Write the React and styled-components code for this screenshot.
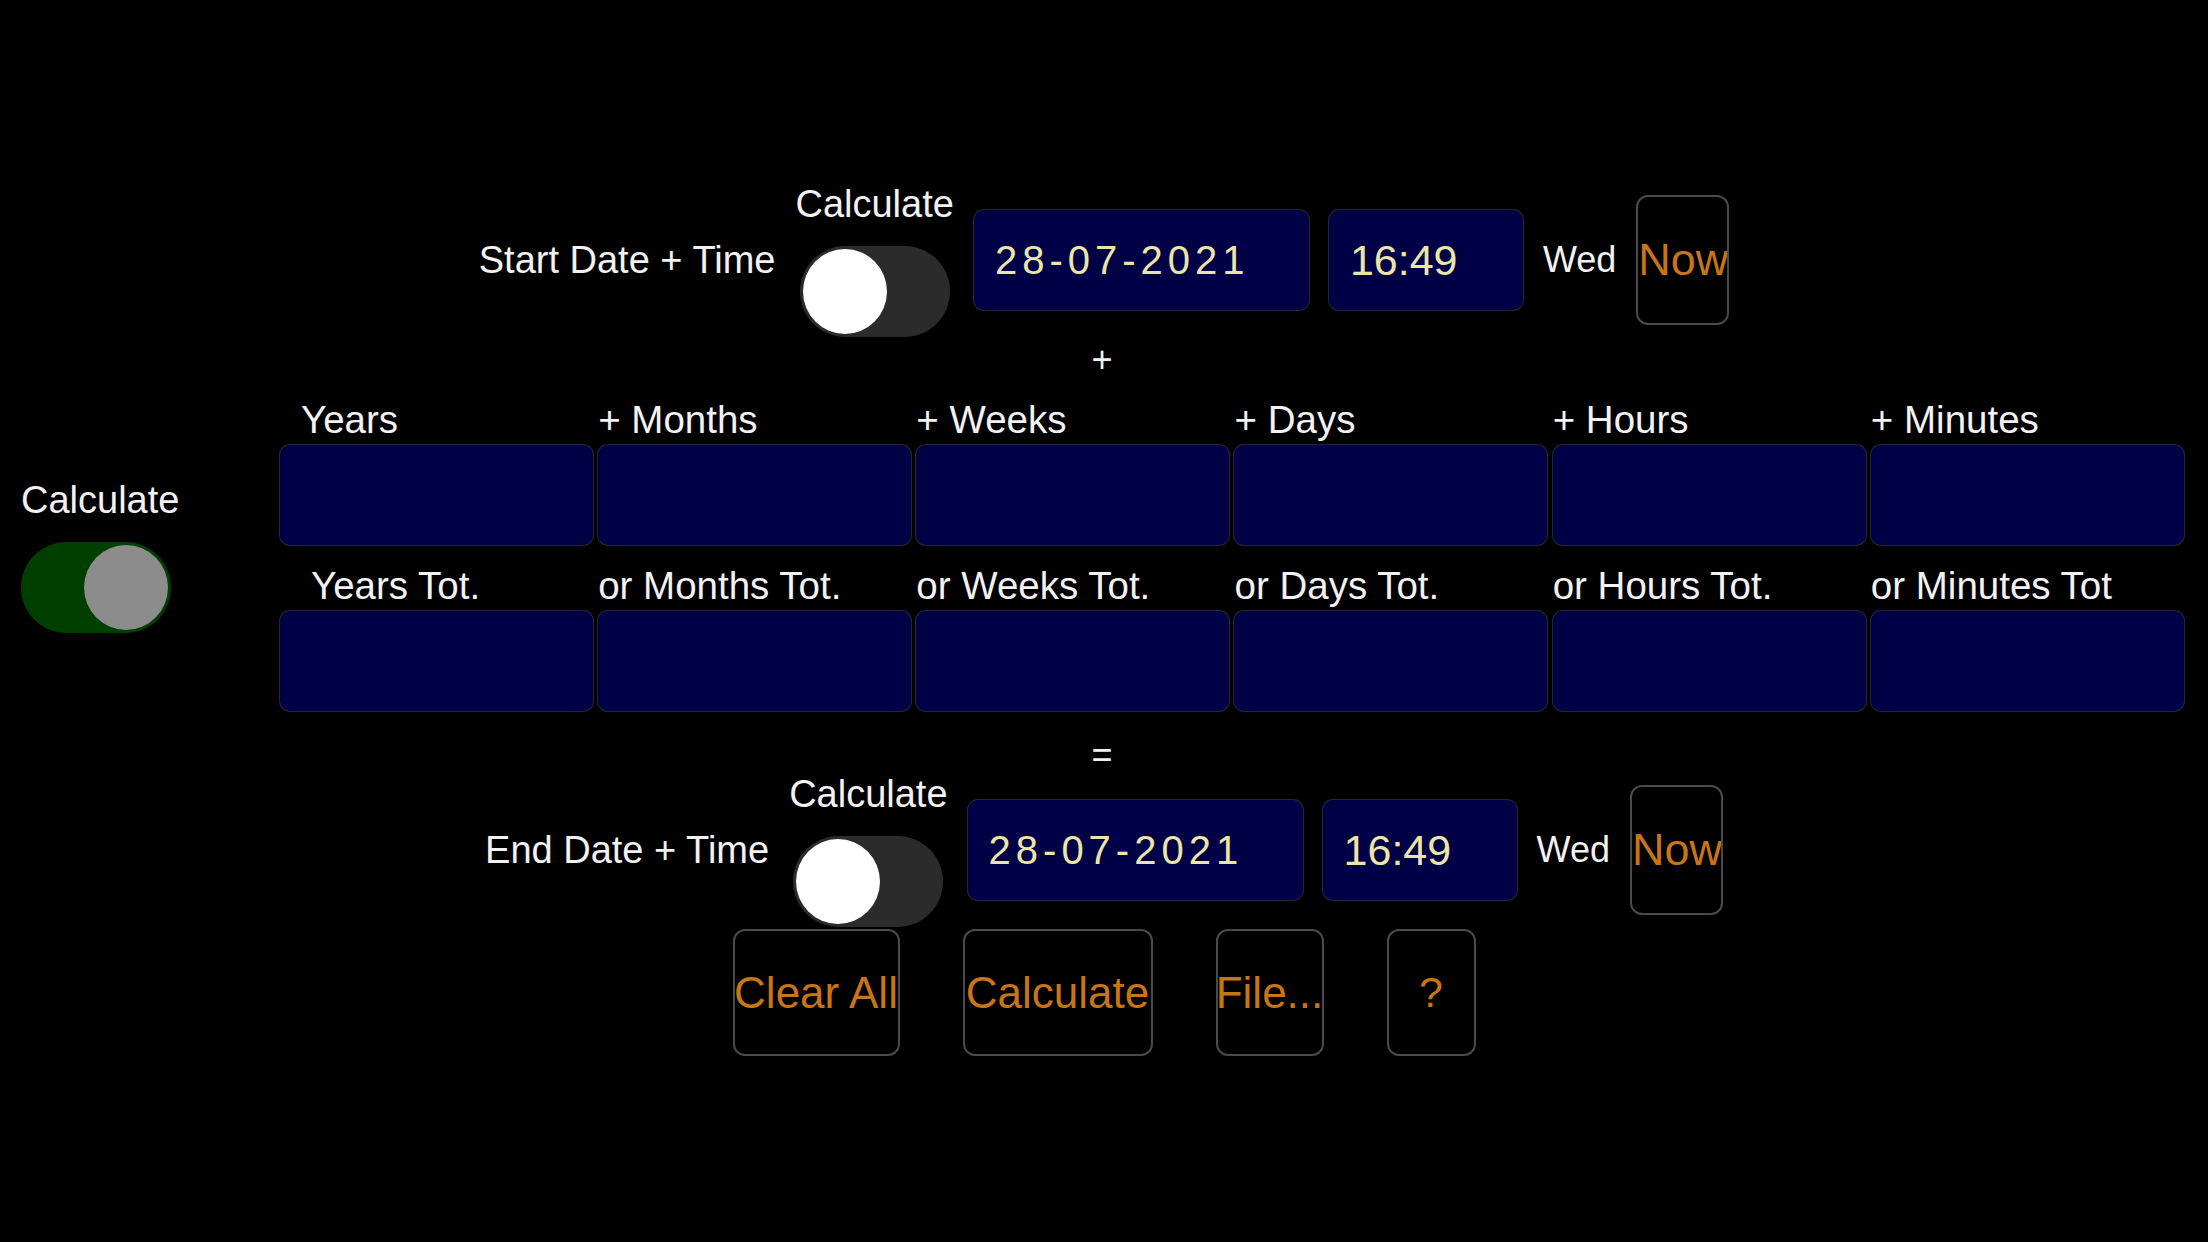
import React from 'react';
import styled, { createGlobalStyle } from 'styled-components';

const GlobalStyle = createGlobalStyle`
  html, body {
    margin: 0;
    padding: 0;
    background: #000;
  }
  body {
    font-family: "Liberation Sans", Arial, sans-serif;
    color: #f2f2f2;
  }
`;

const Page = styled.div`
  width: 2208px;
  height: 1242px;
  display: flex;
  flex-direction: column;
  align-items: stretch;
  padding-top: 183px;
  box-sizing: border-box;
  overflow: hidden;
`;

const DateRow = styled.div`
  display: flex;
  justify-content: center;
  align-items: center;
  gap: 20px;
  height: 154px;
`;

const Text = styled.span`
  font-size: ${(p) => p.$size || 38}px;
  line-height: 42px;
  white-space: nowrap;
  color: #f2f2f2;
`;

const ToggleColumn = styled.div`
  display: flex;
  flex-direction: column;
  align-items: ${(p) => p.$align || 'center'};
  gap: 21px;
`;

const Track = styled.div`
  width: 150px;
  height: 91px;
  border-radius: 46px;
  background: ${(p) => (p.$on ? '#003f00' : '#2b2b2b')};
  display: flex;
  align-items: center;
  justify-content: ${(p) => (p.$on ? 'flex-end' : 'flex-start')};
  padding: 0 3px;
  box-sizing: border-box;
`;

const Knob = styled.div`
  width: 84px;
  height: 85px;
  border-radius: 50%;
  background: ${(p) => (p.$on ? '#8c8c8c' : '#ffffff')};
`;

const Toggle = ({ on }) => (
  <Track $on={on}>
    <Knob $on={on} />
  </Track>
);

const InputBox = styled.div`
  width: ${(p) => p.$w || 313}px;
  height: 100px;
  background: #000046;
  border-radius: 10px;
  box-shadow: 0 0 0 1px rgba(110, 110, 140, 0.35);
  display: flex;
  align-items: center;
  padding-left: 21px;
  box-sizing: border-box;
  color: #ece6a6;
  font-size: ${(p) => p.$size || 40}px;
  letter-spacing: ${(p) => p.$spacing || 0}px;
  white-space: nowrap;
`;

const OutlineButton = styled.button`
  width: ${(p) => p.$w}px;
  height: ${(p) => p.$h || 127}px;
  background: transparent;
  border: 2px solid #4a4a4a;
  border-radius: 12px;
  padding: 0;
  display: flex;
  align-items: center;
  justify-content: ${(p) => p.$justify || 'center'};
  overflow: hidden;
  color: #c87516;
  font-family: "Liberation Sans", Arial, sans-serif;
  font-size: ${(p) => p.$size || 44}px;
  white-space: nowrap;
  box-sizing: border-box;
`;

const Sign = styled.div`
  text-align: center;
  font-size: 36px;
  line-height: 36px;
  margin-top: ${(p) => p.$top}px;
  padding-right: 4px;
`;

const Middle = styled.div`
  display: flex;
  align-items: center;
  margin-top: 22px;
`;

const SidePanel = styled.div`
  width: 280px;
  padding-left: 21px;
  box-sizing: border-box;
`;

const Fields = styled.div`
  width: 1904px;
  display: flex;
  flex-direction: column;
  gap: 21px;
`;

const FieldRow = styled.div`
  display: grid;
  grid-template-columns: repeat(6, 1fr);
  column-gap: 5px;
`;

const Field = styled.div`
  display: flex;
  flex-direction: column;
  gap: 5px;
`;

const FieldLabel = styled.div`
  font-size: 38.5px;
  line-height: 40px;
  height: 40px;
  padding-left: ${(p) => p.$indent || 0}px;
  white-space: nowrap;
`;

const Actions = styled.div`
  display: flex;
  justify-content: center;
  gap: 63px;
  margin-top: 2px;
`;

const DateTimeRow = ({ label }) => (
  <DateRow>
    <Text>{label}</Text>
    <ToggleColumn>
      <Text>Calculate</Text>
      <Toggle on={false} />
    </ToggleColumn>
    <InputBox $w={335} $size={40} $spacing={5}>28-07-2021</InputBox>
    <InputBox $w={194} $size={43}>16:49</InputBox>
    <Text $size={36}>Wed</Text>
    <OutlineButton $w={93} $h={130} $size={45} $justify="flex-start">Now</OutlineButton>
  </DateRow>
);

const addLabels = [
  { text: 'Years', indent: 21 },
  { text: '+ Months' },
  { text: '+ Weeks' },
  { text: '+ Days' },
  { text: '+ Hours' },
  { text: '+ Minutes' },
];

const totalLabels = [
  { text: 'Years Tot.', indent: 31 },
  { text: 'or Months Tot.' },
  { text: 'or Weeks Tot.' },
  { text: 'or Days Tot.' },
  { text: 'or Hours Tot.' },
  { text: 'or Minutes Tot' },
];

const buttons = [
  { text: 'Clear All', w: 167 },
  { text: 'Calculate', w: 190 },
  { text: 'File...', w: 108 },
  { text: '?', w: 89, size: 43 },
];

export default function App() {
  return (
    <Page>
      <GlobalStyle />
      <DateTimeRow label="Start Date + Time" />
      <Sign $top={5}>+</Sign>
      <Middle>
        <SidePanel>
          <ToggleColumn $align="flex-start">
            <Text>Calculate</Text>
            <Toggle on />
          </ToggleColumn>
        </SidePanel>
        <Fields>
          <FieldRow>
            {addLabels.map((l) => (
              <Field key={l.text}>
                <FieldLabel $indent={l.indent}>{l.text}</FieldLabel>
                <InputBox $w={313} />
              </Field>
            ))}
          </FieldRow>
          <FieldRow>
            {totalLabels.map((l) => (
              <Field key={l.text}>
                <FieldLabel $indent={l.indent}>{l.text}</FieldLabel>
                <InputBox $w={313} />
              </Field>
            ))}
          </FieldRow>
        </Fields>
      </Middle>
      <Sign $top={26}>=</Sign>
      <DateTimeRow label="End Date + Time" />
      <Actions>
        {buttons.map((b) => (
          <OutlineButton key={b.text} $w={b.w} $size={b.size}>
            {b.text}
          </OutlineButton>
        ))}
      </Actions>
    </Page>
  );
}
